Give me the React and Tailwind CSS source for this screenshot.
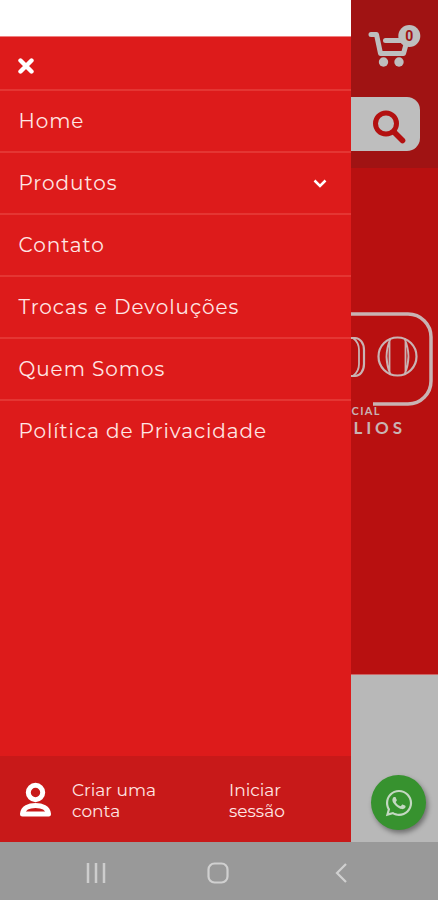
import { FaWhatsapp } from 'react-icons/fa';

const menuItems = [
  { label: 'Home' },
  { label: 'Produtos', hasChildren: true },
  { label: 'Contato' },
  { label: 'Trocas e Devoluções' },
  { label: 'Quem Somos' },
  { label: 'Política de Privacidade' },
];

const CartIcon = () => (
  <svg viewBox="0 0 87 50" className="block h-[50px] w-[87px]" fill="none" stroke="#bebebe" strokeLinecap="round" strokeLinejoin="round">
    <path d="M20 14.500h5.500l4 19h23l2.500-9" strokeWidth="5" />
    <path d="M34.500 20.500h16" strokeWidth="5" />
    <circle cx="32.500" cy="42" r="4.700" fill="#bebebe" stroke="none" />
    <circle cx="48" cy="42" r="4.700" fill="#bebebe" stroke="none" />
    <circle cx="58.300" cy="16" r="11" fill="#bebebe" stroke="none" />
    <text x="58.300" y="20.800" textAnchor="middle" fontSize="14" fontWeight="700" fontFamily="Roboto, sans-serif" fill="#a01313" stroke="none">0</text>
  </svg>
);

const BrandLogo = () => (
  <svg viewBox="0 0 87 150" className="block h-[150px] w-[87px]" fill="none" stroke="#c9b3b3">
    <path d="M0 24h57a23 23 0 0 1 23 23v44a23 23 0 0 1-23 23H22" strokeWidth="3.500" />
    <circle cx="46.500" cy="66.500" r="19" strokeWidth="2.200" />
    <path d="M38.500 50v33M39.500 48.500q-8 18 0 36M54.500 50v33M53.500 48.500q8 18 0 36" strokeWidth="1.800" />
    <path d="M0 48h4c5 0 9 5 9 12v14c0 7-4 12-9 12H0" strokeWidth="2.200" />
    <path d="M2 48c4 3 6 7 6 12v14c0 5-2 9-6 12" strokeWidth="1.800" />
    <g fill="#c9b3b3" stroke="none" fontWeight="700" fontFamily="Lato, sans-serif">
      <text x="0.500" y="125" fontSize="11" textLength="28">CIAL</text>
      <text x="2.500" y="143.500" fontSize="17" textLength="48.500">LIOS</text>
    </g>
  </svg>
);

const Drawer = () => (
  <aside className="flex w-[351px] shrink-0 flex-col bg-[#dd1b1b] text-[#ffe6e4]">
    <div className="h-9 bg-white" />
    <div className="flex h-[55px] items-center border-b-2 border-t border-b-[#e43633] border-t-[#f08080] pl-[18px] pt-1.5">
      <svg viewBox="0 0 16 16" className="h-4 w-4" stroke="#fff" strokeWidth="4.400" strokeLinecap="round">
        <path d="M2.500 2.500l11 11M13.500 2.500l-11 11" />
      </svg>
    </div>
    <nav>
      {menuItems.map((item) => (
        <a key={item.label} className="flex h-[62px] items-center justify-between border-b-2 border-[#e43633] pl-[18.500px] pr-6 last:border-transparent">
          <span className="whitespace-nowrap text-[20px] leading-6 tracking-[0.95px]">{item.label}</span>
          {item.hasChildren && (
            <svg viewBox="0 0 14 9" className="h-[9px] w-3.5" fill="none" stroke="#fff" strokeWidth="2.500">
              <path d="M1.500 1.500L7 7l5.500-5.500" />
            </svg>
          )}
        </a>
      ))}
    </nav>
    <footer className="mt-auto flex h-[86px] items-center bg-[#c81919] pl-5 pt-[3px] text-[#ffe6e4]">
      <svg viewBox="0 0 32 36" className="mb-0.5 h-9 w-8" fill="none" stroke="#fff" strokeWidth="5">
        <circle cx="15.500" cy="10.500" r="7.200" />
        <path d="M2.500 32C3 26 9 23.500 15.500 23.500S28 26 28.500 32z" strokeLinejoin="round" />
      </svg>
      <div className="ml-5 w-[157px] text-[17px] leading-[21px]">Criar uma<br />conta</div>
      <div className="text-[17px] leading-[21px]">Iniciar<br />sessão</div>
    </footer>
  </aside>
);

const StorePage = () => (
  <main className="flex min-w-0 flex-1 flex-col bg-[#b8b8b8]">
    <header className="h-[168px] bg-[#a01313] pt-5">
      <CartIcon />
      <div className="mt-[27px] flex h-[54px] w-[69px] items-center rounded-r-[13px] bg-[#bebebe] pl-[21px] pt-1.5">
        <svg viewBox="0 0 34 34" className="h-[34px] w-[34px]" fill="none" stroke="#b31010" strokeLinecap="round">
          <circle cx="14" cy="13.500" r="10.500" strokeWidth="5" />
          <path d="M22 22l8.500 8.500" strokeWidth="5.600" />
        </svg>
      </div>
    </header>
    <section className="h-[506px] bg-[#b81010] pt-[122px]">
      <BrandLogo />
    </section>
    <div className="flex flex-1 items-end border-t border-[#c66] pb-3 pl-5">
      <button className="flex h-[55px] w-[55px] items-center justify-center rounded-full bg-[#37922f] shadow-[2px_3px_5px_rgba(0,0,0,0.4)]">
        <FaWhatsapp className="h-[30px] w-[30px] text-[#c4d8c2]" />
      </button>
    </div>
  </main>
);

const App = () => (
  <div className="flex h-[900px] w-[438px] flex-col overflow-hidden font-['Montserrat','Inter',sans-serif]">
    <div className="flex min-h-0 flex-1">
      <Drawer />
      <StorePage />
    </div>
    <div className="flex h-[58px] items-center bg-[#999] pl-[86px] pt-1">
      <svg viewBox="0 0 20 20" className="h-5 w-5" stroke="#cdcdcd" strokeWidth="2.500">
        <path d="M2 0v20M10 0v20M18 0v20" />
      </svg>
      <svg viewBox="0 0 22 22" className="ml-[101px] h-[22px] w-[22px]" fill="none" stroke="#d0d0d0" strokeWidth="2.200">
        <rect x="1.500" y="1.500" width="19" height="19" rx="6" />
      </svg>
      <svg viewBox="0 0 12 20" className="ml-[106px] h-5 w-3" fill="none" stroke="#d0d0d0" strokeWidth="2.200">
        <path d="M11 1L2 10l9 9" />
      </svg>
    </div>
  </div>
);

export default App;
